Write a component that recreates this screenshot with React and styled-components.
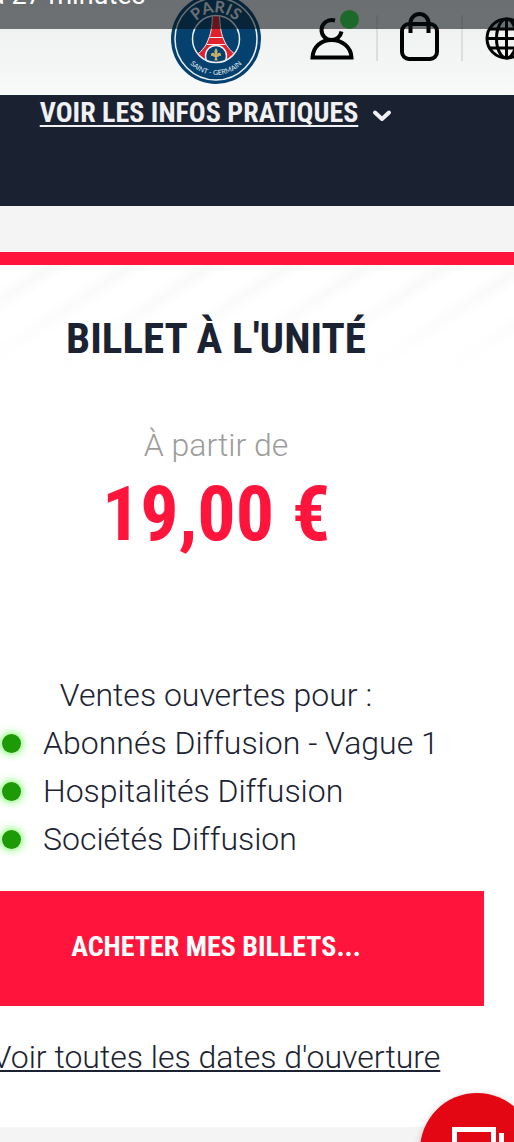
// App.jsx
import React from "react";
import styled, { createGlobalStyle } from "styled-components";

const condensed = `"Roboto Condensed", "Liberation Sans Narrow", "Liberation Sans", sans-serif`;

const GlobalStyle = createGlobalStyle`
  * {
    box-sizing: border-box;
  }
  body {
    margin: 0;
    overflow-x: hidden;
    background: #f4f4f4;
    color: #1b2333;
    font-family: Roboto, "Liberation Sans", sans-serif;
    font-weight: 300;
  }
`;

// The page is panned sideways, its left edge is off screen
const Page = styled.div`
  margin-left: -82px;
`;

const StatusBar = styled.div`
  position: absolute;
  top: 0;
  left: 0;
  right: 0;
  height: 29px;
  overflow: hidden;
  background: rgba(8, 14, 18, 0.57);
  z-index: 2;
`;

const StatusText = styled.p`
  margin: -19px 0 0 -10px;
  color: #fff;
  font-size: 27px;
  font-weight: 400;
  line-height: 28px;
`;

const Header = styled.header`
  display: grid;
  grid-template-columns: 1fr auto 1fr;
  align-items: start;
  height: 95px;
  overflow: hidden;
  background: linear-gradient(#eceeee, #f8faf9);
`;

const HomeLink = styled.a`
  grid-column: 2;
  margin-top: -6px;

  svg {
    display: block;
  }
`;

const Actions = styled.nav`
  display: flex;
  align-items: center;
  height: 46px;
  margin-top: 15px;
  padding-left: 49px;
  min-width: 0;
`;

const IconButton = styled.button`
  position: relative;
  flex: none;
  padding: 0;
  border: 0;
  background: none;
  color: #000;

  svg {
    display: block;
  }
`;

const Badge = styled.span`
  position: absolute;
  top: -6px;
  right: -5px;
  width: 19px;
  height: 19px;
  border-radius: 50%;
  background: #36e24a;
`;

const Separator = styled.span`
  flex: none;
  width: 2px;
  height: 46px;
  margin: 0 22px;
  background: #dcdede;
`;

const InfoBar = styled.section`
  display: flex;
  justify-content: center;
  align-items: flex-start;
  gap: 14px;
  height: 111px;
  background: #1a2232;
  color: #f1f1f4;

  svg {
    margin-top: 14px;
  }
`;

const InfoLink = styled.a`
  color: inherit;
  font-family: ${condensed};
  font-size: 28px;
  font-weight: 700;
  line-height: 36px;
  text-decoration: underline;
  text-decoration-thickness: 2px;
  text-decoration-skip-ink: none;
  text-underline-offset: 3px;
`;

const Card = styled.main`
  display: flex;
  flex-direction: column;
  align-items: center;
  margin-top: 46px;
  padding: 40px 30px 51px;
  border-top: 13px solid #ff143c;
  background:
    linear-gradient(rgba(255, 255, 255, 0), #fff) 0 0 / 100% 110px no-repeat,
    repeating-linear-gradient(146deg, #fff 0 20px, #f9f9f9 32px, #fff 44px) 0 0 / 100% 110px no-repeat,
    #fff;
`;

const Title = styled.h1`
  margin: 0;
  font-family: ${condensed};
  font-size: 43px;
  font-weight: 700;
  line-height: 66px;
`;

const From = styled.p`
  margin: 50px 0 0;
  color: #9c9c9c;
  font-size: 32px;
  line-height: 48px;
`;

const Price = styled.p`
  margin: 0;
  color: #ff143c;
  font-family: ${condensed};
  font-size: 76px;
  font-weight: 700;
  line-height: 90px;
`;

const Sales = styled.section`
  align-self: stretch;
  margin-top: 112px;
  font-size: 32px;
  line-height: 48px;
`;

const SalesTitle = styled.h2`
  margin: 0;
  font: inherit;
  text-align: center;
`;

const SalesList = styled.ul`
  margin: 0;
  padding: 0 0 0 54px;
  list-style: none;
`;

const SalesItem = styled.li`
  display: flex;
  align-items: center;
  gap: 22px;

  &::before {
    content: "";
    width: 19px;
    height: 19px;
    border-radius: 50%;
    background: #1d9a06;
    box-shadow: 0 0 8px 1px #6dfa5c;
  }
`;

const BuyButton = styled.button`
  align-self: stretch;
  height: 115px;
  margin-top: 28px;
  padding: 0 0 4px;
  border: 0;
  background: #ff143c;
  color: #fff;
  font-family: ${condensed};
  font-size: 28px;
  font-weight: 700;
`;

const DatesLink = styled.a`
  margin-top: 32px;
  color: inherit;
  font-size: 32px;
  line-height: 38px;
  text-decoration: underline;
  text-decoration-thickness: 2px;
  text-underline-offset: 2px;
  white-space: nowrap;
`;

const ChatButton = styled.button`
  position: fixed;
  right: -20px;
  bottom: -65px;
  width: 114px;
  height: 114px;
  padding: 0;
  border: 0;
  border-radius: 50%;
  background: #e30613;
  box-shadow: 0 2px 8px rgba(0, 0, 0, 0.2);

  svg {
    display: block;
  }
`;

const Logo = () => (
  <svg width="90" height="90" viewBox="0 0 90 90" aria-hidden="true">
    <defs>
      <path id="arc-top" d="M18.500 45a26.500 26.500 0 0 1 53 0" />
      <path id="arc-bottom" d="M9 45a36 36 0 0 0 72 0" />
      <clipPath id="disc">
        <circle cx="45" cy="45" r="23" />
      </clipPath>
    </defs>
    <circle cx="45" cy="45" r="45" fill="#04416f" />
    <circle cx="45" cy="45" r="41" fill="none" stroke="#e9eff3" strokeWidth="1.5" />
    <g clipPath="url(#disc)">
      <path
        d="M41.500 18h7c.2 12 1 20 4 27 3 8 9 14 15 18l-7 10H30l-7-10c6-4 12-10 14.500-18 3-7 3.800-15 4-27z"
        fill="#e2202c"
        stroke="#e9eff3"
        strokeWidth="1"
      />
      <path d="M38.500 43.500h13M35.500 50.500h19" stroke="#e9eff3" strokeWidth="1" />
      <circle cx="45" cy="62" r="10.500" fill="#04416f" stroke="#e9eff3" strokeWidth="1.5" />
    </g>
    <circle cx="45" cy="45" r="23.5" fill="none" stroke="#e9eff3" strokeWidth="1.5" />
    <path
      d="M45 54c2 2.500 2 4.500.7 7 1-2.500 4-3 4.300-.5.100 1.500-1 2-1.800 1.200-.6 1-1.600 1.300-2.400 1.300l.8 3.500h-3.200l.8-3.500c-.8 0-1.800-.3-2.400-1.300-.8.8-1.900.3-1.800-1.200.3-2.500 3.300-2 4.300.5-1.300-2.500-1.300-4.500.7-7z"
      fill="#c2b066"
    />
    <text fill="#e9eff3" fontFamily="Lato, sans-serif" fontSize="16" fontWeight="700" textAnchor="middle">
      <textPath href="#arc-top" startOffset="50%">PARIS</textPath>
    </text>
    <text fill="#e9eff3" fontFamily="Lato, sans-serif" fontSize="7" fontWeight="400" textAnchor="middle">
      <textPath href="#arc-bottom" startOffset="50%">SAINT - GERMAIN</textPath>
    </text>
  </svg>
);

const UserIcon = () => (
  <svg width="44" height="44" viewBox="0 0 44 44" fill="none" stroke="currentColor" strokeWidth="4">
    <path d="M25 4.500C17 2.500 11.500 8 11.500 14c0 5.500 4.500 10 10 10 5 0 9-3.500 10-8.500" />
    <path d="M2.500 41.500C3 31 11 24 21.500 24S41 31 41.500 41.500z" />
  </svg>
);

const BagIcon = () => (
  <svg width="39" height="52" viewBox="0 0 39 52" fill="none" stroke="currentColor" strokeWidth="4">
    <rect x="2" y="12" width="35" height="35" rx="7" />
    <path d="M10.500 21V11a9 9 0 0 1 18 0v10" />
  </svg>
);

const GlobeIcon = () => (
  <svg width="43" height="43" viewBox="0 0 43 43" fill="none" stroke="currentColor" strokeWidth="3">
    <circle cx="21.5" cy="21.5" r="19.5" />
    <ellipse cx="21.5" cy="21.5" rx="10" ry="19.5" />
    <path d="M21.500 2v39M4.500 12h34M2 21.500h39M4.500 31h34" />
  </svg>
);

const Chevron = () => (
  <svg width="20" height="14" viewBox="0 0 20 14" fill="none" stroke="currentColor" strokeWidth="4" strokeLinecap="round" strokeLinejoin="round">
    <path d="M3 3.500l7 6.500 7-6.500" />
  </svg>
);

const ChatIcon = () => (
  <svg width="114" height="114" viewBox="0 0 114 114" fill="none" stroke="#fff" strokeWidth="5">
    <path d="M34.500 36.500h39v30h-24l-9 8v-8h-6z" />
    <path d="M81.500 40v35h-6v8l-9-8h-11" />
  </svg>
);

const sales = ["Abonnés Diffusion - Vague 1", "Hospitalités Diffusion", "Sociétés Diffusion"];

const App = () => {
  return (
    <>
      <GlobalStyle />
      <StatusBar>
        <StatusText>à 27 minutes</StatusText>
      </StatusBar>
      <Page>
        <Header>
          <HomeLink href="#" aria-label="Paris Saint-Germain">
            <Logo />
          </HomeLink>
          <Actions>
            <IconButton aria-label="Mon compte">
              <UserIcon />
              <Badge />
            </IconButton>
            <Separator />
            <IconButton aria-label="Panier">
              <BagIcon />
            </IconButton>
            <Separator />
            <IconButton aria-label="Langue">
              <GlobeIcon />
            </IconButton>
          </Actions>
        </Header>
        <InfoBar>
          <InfoLink href="#infos">VOIR LES INFOS PRATIQUES</InfoLink>
          <Chevron />
        </InfoBar>
        <Card>
          <Title>BILLET À L&apos;UNITÉ</Title>
          <From>À partir de</From>
          <Price>19,00 €</Price>
          <Sales>
            <SalesTitle>Ventes ouvertes pour :</SalesTitle>
            <SalesList>
              {sales.map((name) => (
                <SalesItem key={name}>{name}</SalesItem>
              ))}
            </SalesList>
          </Sales>
          <BuyButton>ACHETER MES BILLETS...</BuyButton>
          <DatesLink href="#dates">Voir toutes les dates d&apos;ouverture</DatesLink>
        </Card>
      </Page>
      <ChatButton aria-label="Chat">
        <ChatIcon />
      </ChatButton>
    </>
  );
};

export default App;
